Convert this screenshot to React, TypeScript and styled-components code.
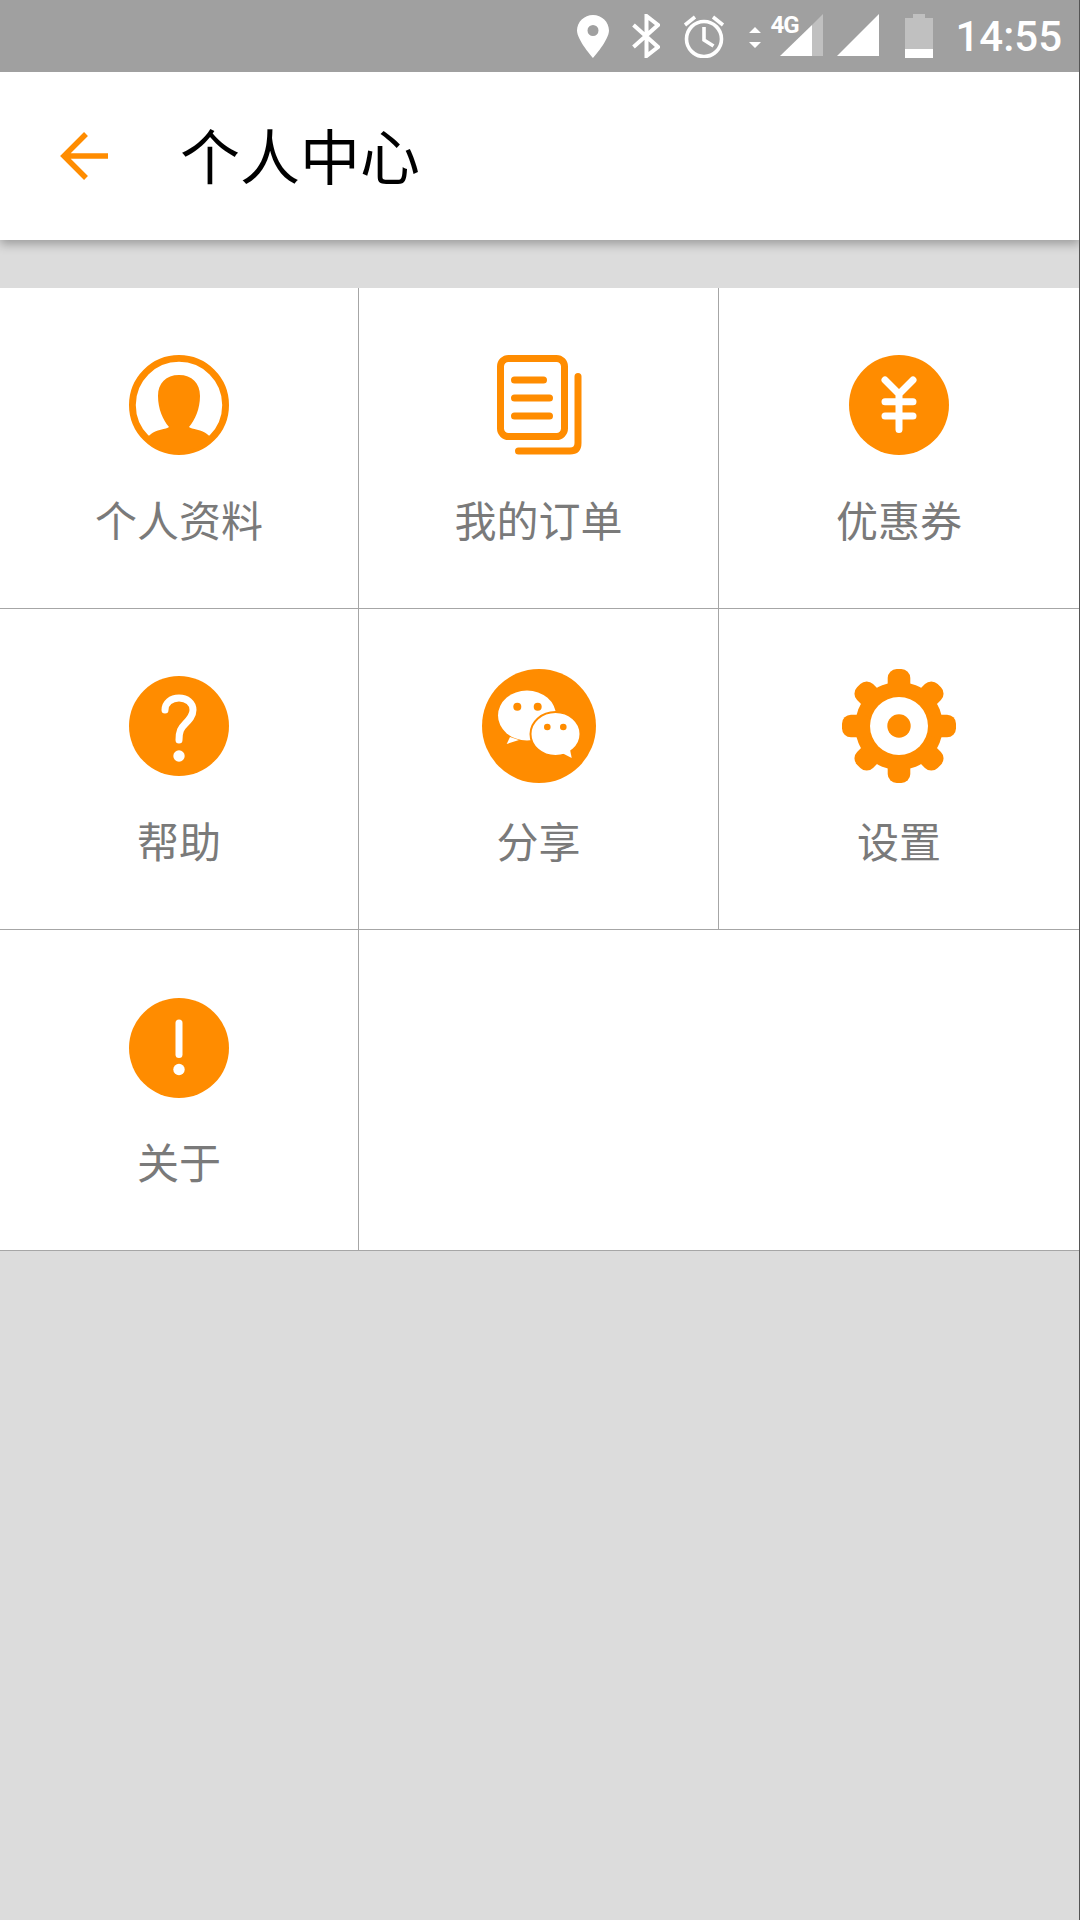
import React from "react"
import styled, { createGlobalStyle } from "styled-components"

const ORANGE = "#ff8c00"

const GlobalStyle = createGlobalStyle`
  html, body {
    margin: 0;
    padding: 0;
    background: #dcdcdc;
  }
`

const Page = styled.div`
  position: relative;
  width: 1080px;
  min-height: 1920px;
  display: flex;
  flex-direction: column;
  background: #dcdcdc;
  font-family: "Noto Sans CJK SC", sans-serif;
`

const StatusBar = styled.div`
  position: relative;
  z-index: 1;
  height: 72px;
  box-sizing: border-box;
  padding: 14px 18px 0 0;
  display: flex;
  justify-content: flex-end;
  align-items: flex-start;
  background: #a0a0a0;
`

const StatusIcon = styled.svg<{ $gap?: number }>`
  display: block;
  height: 44px;
  margin-left: ${(p) => p.$gap || 0}px;
  flex: none;
`

const Signal = styled.div`
  position: relative;
  margin-left: 9px;
  width: 53px;
  height: 44px;
  flex: none;
`

const NetworkType = styled.span`
  position: absolute;
  top: 1px;
  left: 0;
  font-family: Roboto, sans-serif;
  font-size: 24px;
  line-height: 20px;
  font-weight: 700;
  letter-spacing: -1px;
  color: #fff;
`

const Clock = styled.div`
  margin-left: 22px;
  height: 44px;
  line-height: 46px;
  font-family: Roboto, sans-serif;
  font-size: 42px;
  font-weight: 500;
  color: #fff;
`

const Header = styled.div`
  height: 168px;
  box-sizing: border-box;
  padding-left: 59px;
  display: flex;
  align-items: center;
  background: #fff;
  box-shadow: 0 4px 10px rgba(0, 0, 0, 0.3);
`

const BackIcon = styled.svg`
  display: block;
  width: 50px;
  height: 50px;
  flex: none;
`

const Title = styled.div`
  margin-left: 71px;
  margin-bottom: 4px;
  font-size: 60px;
  line-height: 84px;
  color: #000;
`

const Grid = styled.div`
  margin-top: 48px;
  display: grid;
  grid-template-columns: 359px 360px 361px;
  grid-auto-rows: 321px;
  background: #fff;
`

const Cell = styled.div<{ $wide?: boolean }>`
  box-sizing: border-box;
  padding-top: 60px;
  display: flex;
  flex-direction: column;
  align-items: center;
  grid-column: ${(p) => (p.$wide ? "span 2" : "auto")};
  border-right: 1px solid #a6a6a6;
  border-bottom: 1px solid #a6a6a6;
`

const Icon = styled.svg`
  display: block;
  width: 114px;
  height: 114px;
  flex: none;
`

const Label = styled.div`
  margin-top: 27px;
  font-size: 42px;
  line-height: 60px;
  color: #7a7a7a;
`

const Edge = styled.div`
  position: absolute;
  z-index: 2;
  top: 0;
  right: 0;
  width: 1px;
  height: 100%;
  background: #555;
`

const ProfileIcon = () => (
  <Icon viewBox="0 0 114 114">
    <circle cx="57" cy="57" r="46.6" fill="none" stroke={ORANGE} strokeWidth="6.8" />
    <path
      fill={ORANGE}
      d="M57 27c13 0 21 8 21 21 0 13-5 24-11 31 2 2 14 3 18 7 2 2 3 2 5 2-8 9-20 15-33 15s-25-6-33-15c2 0 3 0 5-2 4-4 16-5 18-7-6-7-11-18-11-31 0-13 8-21 21-21z"
    />
  </Icon>
)

const OrdersIcon = () => (
  <Icon viewBox="0 0 114 114">
    <rect x="18.500" y="10.500" width="64" height="78" rx="8" fill="none" stroke={ORANGE} strokeWidth="7" />
    <path
      fill="none"
      stroke={ORANGE}
      strokeWidth="7"
      strokeLinecap="round"
      d="M32.500 32h29M32.500 50h35M32.500 68h35M96 28.500V95q0 8-8 8H36.500"
    />
  </Icon>
)

const CouponIcon = () => (
  <Icon viewBox="0 0 114 114">
    <circle cx="57" cy="57" r="50" fill={ORANGE} />
    <path
      fill="none"
      stroke="#fff"
      strokeWidth="7"
      strokeLinecap="round"
      d="M43 32l14 14 14-14M57 46v35.500M43 53.700h28M43 68h28"
    />
  </Icon>
)

const HelpIcon = () => (
  <Icon viewBox="0 0 114 114">
    <circle cx="57" cy="57" r="50" fill={ORANGE} />
    <path
      fill="none"
      stroke="#fff"
      strokeWidth="7"
      strokeLinecap="round"
      d="M43 41c0-7 6-12 14-12s14 5 14 12c0 6-4 10-8 14-4 4-6 7-6 16"
    />
    <circle cx="57" cy="87" r="5.700" fill="#fff" />
  </Icon>
)

const ShareIcon = () => (
  <Icon viewBox="0 0 114 114">
    <circle cx="57" cy="57" r="57" fill={ORANGE} />
    <ellipse cx="45" cy="46.500" rx="29" ry="25" fill="#fff" />
    <path fill="#fff" d="M28 68l-3.300 7L37 71z" />
    <circle cx="35.300" cy="37.700" r="4" fill={ORANGE} />
    <circle cx="55.700" cy="37.700" r="4" fill={ORANGE} />
    <ellipse cx="73.500" cy="65" rx="25" ry="22" fill="#fff" stroke={ORANGE} strokeWidth="2" />
    <path fill="#fff" d="M80 84l9.700 5-2-10z" />
    <circle cx="65.300" cy="58" r="3.300" fill={ORANGE} />
    <circle cx="81.300" cy="58" r="3.300" fill={ORANGE} />
  </Icon>
)

const SettingsIcon = () => (
  <Icon viewBox="0 0 114 114">
    <g fill={ORANGE}>
      <circle cx="57" cy="57" r="44" />
      {[0, 45, 90, 135, 180, 225, 270, 315].map((angle) => (
        <rect key={angle} x="45.700" y="0" width="22.600" height="30" rx="9" transform={`rotate(${angle} 57 57)`} />
      ))}
    </g>
    <circle cx="57" cy="57" r="29" fill="#fff" />
    <circle cx="57" cy="57" r="11.700" fill={ORANGE} />
  </Icon>
)

const AboutIcon = () => (
  <Icon viewBox="0 0 114 114">
    <circle cx="57" cy="58" r="50" fill={ORANGE} />
    <path fill="none" stroke="#fff" strokeWidth="7" strokeLinecap="round" d="M57 33v31.500" />
    <circle cx="57" cy="79.500" r="5.700" fill="#fff" />
  </Icon>
)

const items = [
  { label: "个人资料", icon: <ProfileIcon /> },
  { label: "我的订单", icon: <OrdersIcon /> },
  { label: "优惠券", icon: <CouponIcon /> },
  { label: "帮助", icon: <HelpIcon /> },
  { label: "分享", icon: <ShareIcon /> },
  { label: "设置", icon: <SettingsIcon /> },
  { label: "关于", icon: <AboutIcon /> },
]

const App = () => {
  return (
    <Page>
      <GlobalStyle />
      <StatusBar>
        <StatusIcon width="32" viewBox="0 0 32 44">
          <path
            fill="#fff"
            fillRule="evenodd"
            d="M16 1C7.200 1 0 8 0 16.500 0 26 16 44 16 44s16-18 16-27.500C32 8 24.800 1 16 1zm0 21a5.500 5.500 0 1 1 0-11 5.500 5.500 0 0 1 0 11z"
          />
        </StatusIcon>
        <StatusIcon $gap={23} width="28" viewBox="0 0 28 44">
          <path fill="none" stroke="#fff" strokeWidth="4" d="M1.500 11L26 33l-11.500 9V2L26 11 1.500 33" />
        </StatusIcon>
        <StatusIcon $gap={23} width="42" viewBox="0 0 42 44">
          <g fill="none" stroke="#fff" strokeWidth="3.600">
            <circle cx="21" cy="25" r="17.500" />
            <path d="M21 13v13l9.500 6M2 11l10-8M40 11L30 3" />
          </g>
        </StatusIcon>
        <StatusIcon $gap={24} width="12" viewBox="0 0 12 44">
          <path fill="#fff" d="M6 13l6 6H0zM6 34l-6-6h12z" />
        </StatusIcon>
        <Signal>
          <StatusIcon width="53" viewBox="0 0 53 44">
            <path fill="#c0c0c0" d="M42 11L53 0v42H42z" />
            <path fill="#fff" d="M10 42l32-31v31z" />
          </StatusIcon>
          <NetworkType>4G</NetworkType>
        </Signal>
        <StatusIcon $gap={14} width="42" viewBox="0 0 42 44">
          <path fill="#fff" d="M0 42L42 0v42z" />
        </StatusIcon>
        <StatusIcon $gap={26} width="28" viewBox="0 0 28 44">
          <path fill="#c0c0c0" d="M8 0h12v4h8v32H0V4h8z" />
          <path fill="#fff" d="M0 35h28v9H0z" />
        </StatusIcon>
        <Clock>14:55</Clock>
      </StatusBar>
      <Header>
        <BackIcon viewBox="0 0 50 50">
          <path fill="none" stroke={ORANGE} strokeWidth="5.500" d="M49 25H5M27 3L5 25l22 22" />
        </BackIcon>
        <Title>个人中心</Title>
      </Header>
      <Grid>
        {items.map((item) => (
          <Cell key={item.label}>
            {item.icon}
            <Label>{item.label}</Label>
          </Cell>
        ))}
        <Cell $wide />
      </Grid>
      <Edge />
    </Page>
  )
}

export default App
